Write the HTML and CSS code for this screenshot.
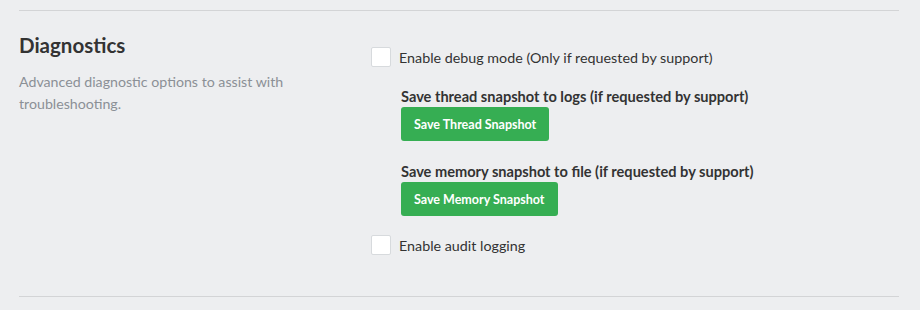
FILE: index.html
```html
<!DOCTYPE html>
<html lang="en">
<head>
    <meta charset="UTF-8">
    <title>Diagnostics</title>
    <link rel="stylesheet" href="styles.css">
</head>
<body>
    <div class="section">
        <div class="section-info">
            <h2>Diagnostics</h2>
            <p class="section-desc">Advanced diagnostic options to assist with troubleshooting.</p>
        </div>
        <div class="section-body">
            <label class="check-row">
                <span class="checkbox"></span>
                <span>Enable debug mode (Only if requested by support)</span>
            </label>
            <div class="action">
                <div class="action-label">Save thread snapshot to logs (if requested by support)</div>
                <button class="btn-green">Save Thread Snapshot</button>
            </div>
            <div class="action">
                <div class="action-label">Save memory snapshot to file (if requested by support)</div>
                <button class="btn-green">Save Memory Snapshot</button>
            </div>
            <label class="check-row">
                <span class="checkbox"></span>
                <span>Enable audit logging</span>
            </label>
        </div>
    </div>
</body>
</html>
```

FILE: styles.css
```css
body { margin: 0; background-color: #edeef0; font-family: Lato, "Open Sans", sans-serif; color: #333; }
.section { display: flex; margin: 10px 21px 0 19px; padding: 22px 0 41px; border-top: 1px solid #d3d4d6; border-bottom: 1px solid #d3d4d6; }
.section-info { width: 352px; flex: none; }
.section-info h2 { margin: 0; font-size: 20.5px; font-weight: bold; line-height: 24px; color: #333; }
.section-desc { margin: 14px 0 0; font-size: 14.2px; line-height: 22px; color: #8b9096; width: 285px; }
.section-body { display: flex; flex-direction: column; padding-top: 14px; }
.check-row { display: flex; align-items: center; gap: 8px; font-size: 14.3px; color: #333; }
.checkbox { width: 18px; height: 18px; background-color: #fff; border: 1px solid #d7dadd; border-radius: 2px; }
.action { margin: 20px 0 0 30px; display: flex; flex-direction: column; align-items: flex-start; }
.action + .action { margin-top: 21px; }
.action + .check-row { margin-top: 19px; }
.action-label { font-size: 14.6px; font-weight: bold; line-height: 20px; color: #333; }
.btn-green { background-color: #36ae53; color: #fff; border: none; border-radius: 3px; font-family: inherit; font-size: 12.5px; font-weight: bold; height: 34px; padding: 0 13px; }
```
